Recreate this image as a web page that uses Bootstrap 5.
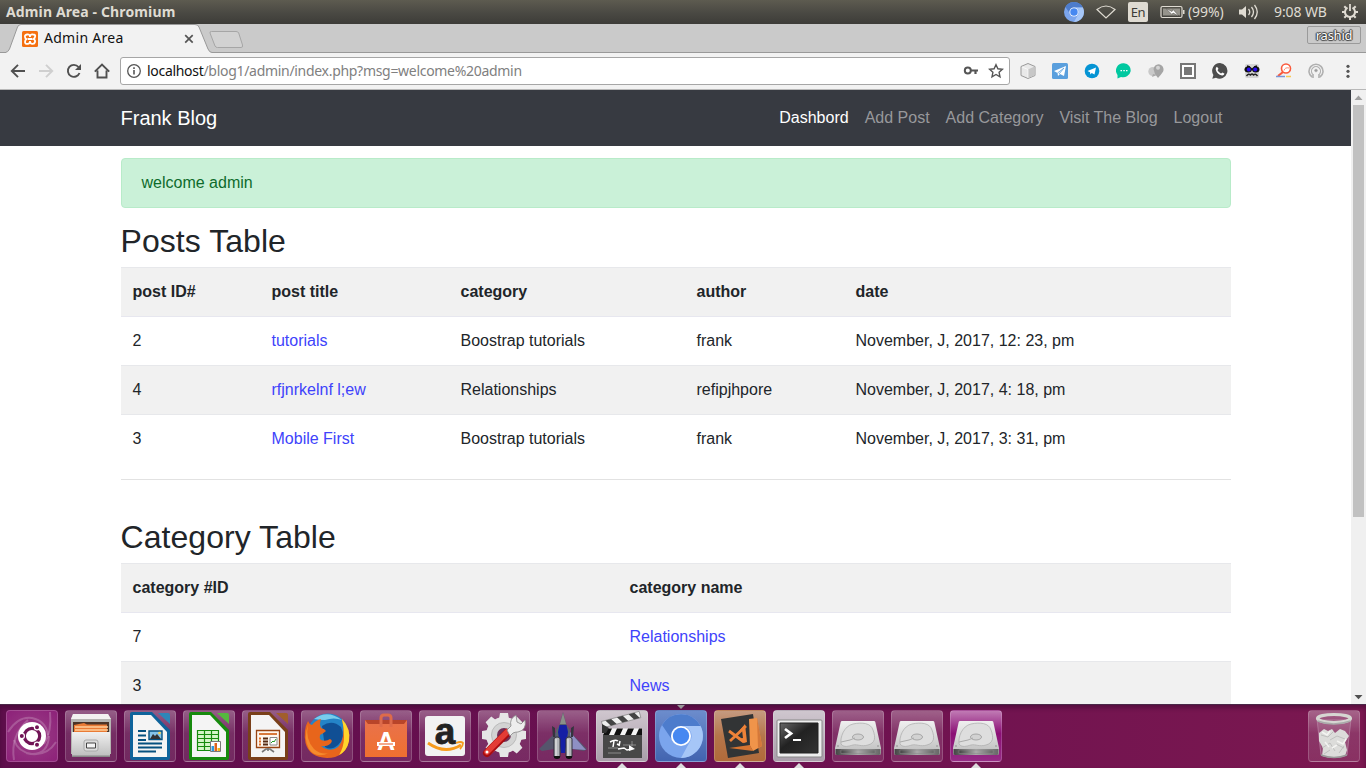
<!DOCTYPE html>
<html lang="en">
<head>
<meta charset="utf-8">
<title>Admin Area</title>
<link href="https://cdn.jsdelivr.net/npm/bootstrap@5.3.0/dist/css/bootstrap.min.css" rel="stylesheet">
<style>
body{width:1366px;height:768px;overflow:hidden;font-family:"Liberation Sans",Arial,sans-serif;color:#212529;line-height:1.5}
svg{display:block;flex:none}
.ui{font-family:"Noto Sans","Open Sans",sans-serif;line-height:1;white-space:nowrap}
.panel{height:24px;background:linear-gradient(#5d5b50,#4b4a44 50%,#3d3c38);color:#dfdbd2;padding-left:6px}
.panel-title{font-size:14px;font-weight:700;letter-spacing:.13px}
.tray{width:302px}
.lang{width:20px;height:20px;background:#dfdbd2;color:#3c3b37;border-radius:2px;font-size:13px;letter-spacing:-.5px}
.tray-text{font-size:14px;letter-spacing:-.1px}
.strip{height:29px;background:#cacaca;border-bottom:1px solid #999;padding-left:6px}
.tabx{width:206px;height:29px;margin-bottom:-1px}
.tabx>.shape{position:absolute;left:0;top:0}
.tab-in{padding:0 9px 0 16px;height:29px;position:relative;color:#111}
.tab-label{font-size:14px;letter-spacing:.28px;padding-bottom:1px}
.user-btn{width:54px;height:18px;margin:2px 5px 0 0;border:1px solid #9a9a9a;border-radius:2px;font-size:13px;letter-spacing:-.25px;color:#fff;text-shadow:0 0 1px #222,1px 0 1px #444,-1px 0 1px #444,0 1px 1px #444,0 -1px 1px #444}
.toolbar{height:37px;background:#f2f2f2;border-bottom:1px solid #b8b8b8;padding:0 10px}
.omni{width:890px;height:28px;background:#fff;border:1px solid #a6a6a6;border-radius:3px;margin-left:10px;padding:0 5px;font-size:14px;letter-spacing:-.3px;color:#808080}
.omni b{font-weight:400;color:#111}
.view{height:614px;overflow:hidden}
.site-nav{background:#373a41;height:56px;padding:8px 0}
.wrap-page{width:1110px;margin-left:120.5px}
.site-nav .navbar-brand{font-size:20px;line-height:30px;color:#fff;padding:5px 0;margin:0}
.site-nav .nav-link{font-size:16px;line-height:24px;padding:8px;color:#97989b}
.site-nav .nav-link.active{color:#fff}
.note{margin:12px 0 16px;padding:12px 20px;border:1px solid #b8ebc9;border-radius:4px;background:#caf1d8;color:#0e6b2c;line-height:24px}
h2{font-size:32px;font-weight:400;line-height:1.1;margin:0 0 8px;letter-spacing:.05px}
.table{table-layout:fixed;margin-bottom:15px;color:#212529}
.table>tbody>tr>*{padding:12px;border-width:1px 0 0;border-color:#e7e8eb;height:49px;line-height:24px;background:transparent;box-shadow:none;color:#212529}
.table>tbody>tr:nth-child(odd)>*{background:#f1f1f1}
.table>tbody>tr:nth-child(2)>*{border-top-color:#e7e7ef}
.table a{color:#4043fb;text-decoration:none}
.c1{width:139px}.c2{width:189px}.c3{width:236px}.c4{width:159px}.k1{width:497px}
.rule{height:1px;background:#e2e2e2;margin-bottom:40px}
.scroll{width:15px;background:#f0f0f0}
.thumb{width:11px;height:412px;background:#c1c1c1;margin-top:1px}
.dock{height:64px;background:linear-gradient(90deg,#5f0e4c,#6a1050 50%,#7b1850);border-top:1px solid #4a2848;padding:5px 6px 0;box-shadow:inset 0 3px 4px #3b082f88}
.tile{width:52px;height:52px;border-radius:4px;border:1px solid #ffffff2e;background:linear-gradient(#ffffff55,#ffffff22 45%,#ffffff1c);position:relative;flex:none}
.tile>svg{margin:-1px;overflow:visible}
.tile.t-ub{background:radial-gradient(circle,#a2438c,#932f7f 55%,#8d2179)}
.tile.t-gray{background:linear-gradient(#cfc6ce,#a99eaa)}
.tile.t-blue{background:linear-gradient(#6c8ccc,#4264b0)}
.tile.t-org{background:linear-gradient(#c59a80,#b5754a 50%,#b06a3a)}
.tile.t-mag{background:linear-gradient(#c07ab4,#8b0f75 45%,#962c85)}
.run::after,.foc::before{content:"";position:absolute;left:19.500px;border:5px solid transparent}
.run::after{bottom:-7px;border-top:0;border-bottom-color:#ddd}
.foc::before{top:-6px;border-bottom:0;border-width:4px 4px 0;left:20.500px;border-top-color:#999}
</style>
</head>
<body class="d-flex flex-column">
<svg width="0" height="0" class="position-absolute">
<defs>
<linearGradient id="metal" x2="0" y2="1"><stop stop-color="#f0f0f0"/><stop offset="1" stop-color="#bcbcbc"/></linearGradient>
<linearGradient id="gbag" x2="0" y2="1"><stop stop-color="#e8724c"/><stop offset="1" stop-color="#f07030"/></linearGradient>
<linearGradient id="gdark" x2="1" y2="1"><stop stop-color="#666"/><stop offset=".45" stop-color="#222"/><stop offset="1" stop-color="#333"/></linearGradient>
<linearGradient id="base" x2="1"><stop stop-color="#444"/><stop offset=".5" stop-color="#aaa"/><stop offset="1" stop-color="#666"/></linearGradient>
<symbol id="drive" viewBox="0 0 52 52">
<path d="M10 11h32q1 0 1.3 1L49 38v5q0 2-2 2H5q-2 0-2-2v-5L8.700 12q.3-1 1.300-1z" fill="url(#metal)"/>
<path d="M3.500 39h45v4.500q0 1.500-2 1.500h-41q-2 0-2-1.500z" fill="url(#base)"/><path d="M9 40h34v3.500H9z" fill="url(#base)" stroke="#888" stroke-width=".5"/>
<path d="M9 34c-1-7 3-18 12-20 9-2 18-1 20 6 3 8 2 13-5 15-7 2-10-1-15 0-4 1-9 3-12-1z" fill="#dedede" stroke="#ababab" stroke-width=".7"/>
<ellipse cx="26" cy="27" rx="5.500" ry="3" fill="#d2d2d2" stroke="#999" stroke-width=".8"/><path d="M9 32l9-2 5-2" stroke="#aaa" fill="none"/>
<circle cx="6" cy="36" r=".8" fill="#888"/><circle cx="46" cy="36" r=".8" fill="#888"/>
</symbol>
<symbol id="chromium" viewBox="0 0 44 44">
<circle cx="22" cy="22" r="22" fill="#7ba5ed"/><path d="M3 11A22 22 0 0 1 41.500 12H22a10 10 0 0 0-9.500 13z" fill="#4d7ccc"/>
<path d="M41.500 12A22 22 0 0 1 22 44L31.500 26.500A10 10 0 0 0 22 12z" fill="#a6c6f7"/>
<circle cx="22" cy="22" r="10" fill="#fff"/><circle cx="22" cy="22" r="8.200" fill="#4688f1"/>
</symbol>
</defs>
</svg>

<header class="panel ui d-flex align-items-center justify-content-between flex-shrink-0">
  <span class="panel-title">Admin Area - Chromium</span>
  <div class="tray d-flex align-items-center">
    <svg width="20" height="20" class="me-3"><use href="#chromium"/></svg>
    <svg width="20" height="16" viewBox="0 0 20 16" style="margin-left:-4px"><path d="M1 5.500Q10-1.500 19 5.500L10 14z" fill="none" stroke="#dfdbd2" stroke-width="1.200"/></svg>
    <span class="lang d-flex align-items-center justify-content-center" style="margin-left:12px">En</span>
    <svg width="25" height="14" viewBox="0 0 25 14" style="margin-left:12px"><rect x="1" y="1.500" width="21" height="11" rx="1.500" fill="none" stroke="#dfdbd2" stroke-width="1.200"/><path d="M3 3.500h17v7H3z" fill="#96948c"/><path d="M23 5v4h1.500V5z" fill="#dfdbd2"/><path d="M6 3.500l6 3 1-2 6 6.500-6-3-1 1.500z" fill="#fff" stroke="#44423d" stroke-width=".5"/></svg>
    <span class="tray-text" style="margin-left:3px;width:40px">(99%)</span>
    <svg width="21" height="16" viewBox="0 0 21 16" style="margin-left:10px"><path d="M1 5.500h3L8 2v12l-4-3.500H1z" fill="#dfdbd2"/><path d="M10.500 5q2.500 3 0 6M13.500 3q4 5 0 10M16.500 1q5.500 7 0 14" fill="none" stroke="#dfdbd2" stroke-width="1.300"/></svg>
    <span class="tray-text" style="margin-left:15px;width:57px">9:08 WB</span>
    <svg width="18" height="18" viewBox="0 0 18 18" style="margin-left:10px"><g fill="none" stroke="#dfdbd2"><path d="M6.500 4.700A5 5 0 1 0 11.500 4.700" stroke-width="2"/><path d="M9 1v7" stroke-width="1.800"/><path d="M3.300 3.300l2 2M14.700 3.300l-2 2M1 9h3M14 9h3M3.300 14.700l2-2M14.700 14.700l-2-2M9 14v3" stroke-width="2"/></g></svg>
  </div>
</header>

<div class="strip d-flex flex-shrink-0">
  <div class="tabx position-relative">
    <svg class="shape" width="240" height="29" viewBox="0 0 240 29"><path d="M-1 28.500Q2 28.500 3.500 25L11.500 3Q12.500.5 15 .5H189Q192 .5 193 3L202 25Q203.500 28.500 206 28.500V29H-1z" fill="#f2f2f2"/><path d="M-1 28.500Q2 28.500 3.500 25L11.500 3Q12.500.5 15 .5H189Q192 .5 193 3L202 25Q203.500 28.500 206 28.500" fill="none" stroke="#999"/><path d="M205.500 7.500H230q2 0 2.700 1.500l3.800 12q.7 2.500-1.500 2.500H211.500q-1.700 0-2.500-1.500L204 9q-.5-1.500 1.500-1.500z" fill="#d2d2d2" stroke="#a6a6a6"/></svg>
    <div class="tab-in ui d-flex align-items-center">
      <svg width="16" height="16" viewBox="0 0 16 16"><rect width="16" height="16" rx="1.500" fill="#f57010"/><path d="M5 3.500q3-.5 3 2.500 0-3 3-2.500 3 0 2 2.500-.3 1.500-1.500 2 2 1 1.500 3-.5 2-2.500 1.800Q8 13 8 10q0 3-2.500 2.800Q3 13 3 11q0-2 1.500-3Q3 7.500 3 6q-.5-2 2-2.500zM6 8h4" fill="none" stroke="#fff" stroke-width="1.800"/></svg>
      <span class="tab-label" style="margin-left:6px">Admin Area</span>
      <svg width="10" height="10" viewBox="0 0 10 10" class="ms-auto" style="margin-right:9px"><path d="M1.200 1.200l7.500 7.500m0-7.500L1.200 8.700" stroke="#555" stroke-width="1.700"/></svg>
    </div>
  </div>
  <span class="user-btn ms-auto d-flex align-items-center justify-content-center ui">rashid</span>
</div>

<div class="toolbar ui d-flex align-items-center flex-shrink-0">
  <div class="d-flex" style="gap:12px">
    <svg width="16" height="16" viewBox="0 0 16 16"><path d="M15 8H2M8 1.800L1.800 8 8 14.200" fill="none" stroke="#505050" stroke-width="1.900"/></svg>
    <svg width="16" height="16" viewBox="0 0 16 16"><path d="M1 8h13M8 1.800L14.200 8 8 14.200" fill="none" stroke="#cfcfcf" stroke-width="1.900"/></svg>
    <svg width="16" height="16" viewBox="0 0 16 16"><path d="M13.500 10A6 6 0 1 1 12.500 4" fill="none" stroke="#505050" stroke-width="1.900"/><path d="M15 1v6H9z" fill="#505050"/></svg>
    <svg width="16" height="16" viewBox="0 0 16 16"><path d="M.8 8.700L8 1.500l7.200 7.200M3.500 7.500v7h9v-7" fill="none" stroke="#505050" stroke-width="1.900"/></svg>
  </div>
  <div class="omni d-flex align-items-center">
    <svg width="16" height="16" viewBox="0 0 16 16"><circle cx="8" cy="8" r="6.300" fill="none" stroke="#555" stroke-width="1.300"/><path d="M7.200 4.300h1.600v1.600H7.200zM7.200 7h1.600v4.500H7.200z" fill="#555"/></svg>
    <span style="margin-left:5px"><b>localhost</b>/blog1/admin/index.php?msg=welcome%20admin</span>
    <svg width="16" height="16" viewBox="0 0 16 16" class="ms-auto"><circle cx="4.800" cy="7.500" r="3" fill="none" stroke="#555" stroke-width="2"/><path d="M7.500 7.500H15M12.500 7.500v3.500" stroke="#555" stroke-width="2.200"/></svg>
    <svg width="16" height="16" viewBox="0 0 16 16" style="margin:0 0 0 9px"><path d="M8 1.700l1.900 4.100 4.500.5-3.300 3 .9 4.500-4-2.300-4 2.300.9-4.500-3.300-3 4.500-.5z" fill="none" stroke="#555" stroke-width="1.400"/></svg>
  </div>
  <div class="d-flex gap-3" style="margin-left:10px">
    <svg width="16" height="16" viewBox="0 0 16 16"><path d="M8 .5l7 3v9l-7 3-7-3v-9z" fill="#e9e9e9" stroke="#999"/><path d="M8 6.500l6.500-3v9L8 15z" fill="#c7c7c7"/><path d="M2 4l6 2.500V15" fill="none" stroke="#fff" stroke-width=".7"/></svg>
    <svg width="16" height="16" viewBox="0 0 16 16"><rect width="16" height="16" rx="1.500" fill="#5a9fdd"/><path d="M2 8l12-5-2 10-4-2-2 2-.5-3z" fill="#fff"/><path d="M5.500 10L12 5 7 11" stroke="#5a9fdd" stroke-width=".8" fill="none"/></svg>
    <svg width="16" height="16" viewBox="0 0 16 16"><circle cx="8" cy="8" r="7.300" fill="#0594d4"/><path d="M3.500 8l8.500-3.500-1.500 7-2.800-1.500-1.300 1.500L6 9.200z" fill="#fff"/></svg>
    <svg width="16" height="16" viewBox="0 0 16 16"><path d="M8 .3a7.300 7 0 1 1-3 13.600L1.500 15.500V12A7.300 7.300 0 0 1 8 .3z" fill="#00c8a0"/><path d="M4.500 7h1.500v1.300H4.500zM7.300 7h1.500v1.300H7.300zM10 7h1.500v1.300H10z" fill="#fff"/></svg>
    <svg width="16" height="16" viewBox="0 0 16 16"><circle cx="4.800" cy="8.500" r="4.500" fill="#c9c9c9"/><path d="M4 14l1-3 4 1z" fill="#aaa"/><path d="M10.500 1.200a5.200 5.200 0 0 1 4.500 7.500q-2 3-5 6.300L7 11 5.500 6q1-4.500 5-4.800z" fill="#a5a5a5"/><circle cx="10" cy="4.800" r="2" fill="#d5d5d5"/></svg>
    <svg width="16" height="16" viewBox="0 0 16 16"><path d="M1 1h14v14H1z" fill="#fff" stroke="#777" stroke-width="2"/><path d="M4 4h8v8H4z" fill="#777"/></svg>
    <svg width="16" height="16" viewBox="0 0 16 16"><path d="M8 0a7.800 7.800 0 1 1-4 14.700L.3 15.800 1.400 12A7.800 7.800 0 0 1 8 0z" fill="#4d4d4d"/><path d="M5 3.700l1.500 2-1 1.500q1.500 2.500 3.500 3.300l1.500-1 2 1.300q-.8 2-2.500 1.700Q5 11.500 3.700 6.500q-.2-2 1.300-2.800z" fill="#fff"/></svg>
    <svg width="16" height="16" viewBox="0 0 16 16"><rect x="1" y="1" width="14" height="14" rx="2" fill="#d5d5d5"/><path d="M3 3l3 1M13 3l-3 1M6 6h4" stroke="#111" stroke-width="1.500"/><ellipse cx="4.200" cy="6.500" rx="3.700" ry="3" fill="#111"/><ellipse cx="11.800" cy="6.500" rx="3.700" ry="3" fill="#111"/><circle cx="4.800" cy="6.500" r="2" fill="#2a0cf0"/><circle cx="11.200" cy="6.500" r="2" fill="#2a0cf0"/><path d="M2.500 13q2-3 4-1 1.500-2 3 0 2-2 4 1" fill="none" stroke="#222" stroke-width="1.400"/></svg>
    <svg width="16" height="16" viewBox="0 0 16 16"><circle cx="10" cy="5.500" r="4.500" fill="#fff" stroke="#fa5a3c" stroke-width="1.600"/><path d="M7 9l-5 4" stroke="#fa5a3c" stroke-width="2.200"/><path d="M8 7.500Q9 4 13 5" stroke="#fa8a70" fill="none"/><path d="M0 13.500h9" stroke="#7b95d5" stroke-width="1.500"/><path d="M10 13.500h5" stroke="#f6ca55" stroke-width="1.500"/></svg>
    <svg width="16" height="16" viewBox="0 0 16 16" fill="none" stroke="#b0b0b0"><path d="M4 14A7 7 0 1 1 12 14" stroke-width="1.600"/><path d="M4.500 11A4.500 4.500 0 1 1 11.500 11" stroke-width="1.200"/><circle cx="8" cy="7.500" r="1.300" fill="#999"/><path d="M5 15v-4M11 15v-4" stroke-width="1.600"/></svg>
    <svg width="16" height="16" viewBox="0 0 16 16" fill="#555"><circle cx="8" cy="3.300" r="1.600"/><circle cx="8" cy="8.300" r="1.600"/><circle cx="8" cy="13.300" r="1.600"/></svg>
  </div>
</div>

<div class="view d-flex flex-shrink-0">
  <div class="flex-grow-1 bg-white">
    <nav class="site-nav">
      <div class="wrap-page d-flex justify-content-between align-items-center">
        <a class="navbar-brand" href="#">Frank Blog</a>
        <ul class="nav flex-nowrap">
          <li class="nav-item"><a class="nav-link active" href="#">Dashbord</a></li>
          <li class="nav-item"><a class="nav-link" href="#">Add Post</a></li>
          <li class="nav-item"><a class="nav-link" href="#">Add Category</a></li>
          <li class="nav-item"><a class="nav-link" href="#">Visit The Blog</a></li>
          <li class="nav-item"><a class="nav-link" href="#">Logout</a></li>
        </ul>
      </div>
    </nav>
    <main class="wrap-page">
      <div class="note">welcome admin</div>
      <h2>Posts Table</h2>
      <table class="table">
        <colgroup><col class="c1"><col class="c2"><col class="c3"><col class="c4"><col></colgroup>
        <tbody>
          <tr><th>post ID#</th><th>post title</th><th>category</th><th>author</th><th>date</th></tr>
          <tr><td>2</td><td><a href="#">tutorials</a></td><td>Boostrap tutorials</td><td>frank</td><td>November, J, 2017, 12: 23, pm</td></tr>
          <tr><td>4</td><td><a href="#">rfjnrkelnf l;ew</a></td><td>Relationships</td><td>refipjhpore</td><td>November, J, 2017, 4: 18, pm</td></tr>
          <tr><td>3</td><td><a href="#">Mobile First</a></td><td>Boostrap tutorials</td><td>frank</td><td>November, J, 2017, 3: 31, pm</td></tr>
        </tbody>
      </table>
      <div class="rule"></div>
      <h2>Category Table</h2>
      <table class="table">
        <colgroup><col class="k1"><col></colgroup>
        <tbody>
          <tr><th>category #ID</th><th>category name</th></tr>
          <tr><td>7</td><td><a href="#">Relationships</a></td></tr>
          <tr><td>3</td><td><a href="#">News</a></td></tr>
        </tbody>
      </table>
    </main>
  </div>
  <div class="scroll d-flex flex-column align-items-center">
    <svg width="15" height="14" viewBox="0 0 15 14"><path d="M3.500 10L7.500 5.500l4 4.500z" fill="#a0a0a0"/></svg>
    <div class="thumb"></div>
    <svg width="15" height="14" viewBox="0 0 15 14" class="mt-auto"><path d="M3.500 5h8l-4 4.300z" fill="#505050"/></svg>
  </div>
</div>

<footer class="dock d-flex flex-shrink-0" style="gap:7px">
  <div class="tile t-ub"><svg width="52" height="52" viewBox="0 0 52 52"><g fill="none" stroke="#fff" stroke-opacity=".2" stroke-width="2"><path d="M2 22Q12 6 26 8q14 3 16 17"/><path d="M44 2q2 20-6 32M8 50Q4 26 22 10"/><path d="M43 26Q42 44 26 44 12 42 8 30M50 32q-10 16-30 11"/></g><circle cx="26" cy="26" r="14" fill="#fff"/><circle cx="26" cy="26" r="7.700" fill="none" stroke="#711456" stroke-width="3.200"/><g fill="#711456" stroke="#fff" stroke-width="1.200"><circle cx="15.800" cy="26" r="2.600"/><circle cx="31" cy="17.300" r="2.600"/><circle cx="31" cy="34.700" r="2.600"/></g></svg></div>
  <div class="tile"><svg width="52" height="52" viewBox="0 0 52 52"><path d="M8 4h35l3 5v35H6V9z" fill="#b5b5b1"/><path d="M8 4h35l3 5H6z" fill="#f2f2f0"/><path d="M8 12h36v11H8z" fill="#4c3427"/><path d="M9 15l10-2 3 1.500h20V24H9z" fill="#e97b35"/><path d="M10 17h33M10 20h33" stroke="#ffd09b" stroke-width="1.300"/><path d="M7 22h38v25H7z" fill="url(#metal)"/><path d="M7 45.500h38V47H7z" fill="#888"/><rect x="19" y="30" width="14" height="11" rx="2" fill="#ddd" stroke="#a8a8a8"/><path d="M21.500 33h9v5h-9z" fill="#f4f4f4" stroke="#444"/></svg></div>
  <div class="tile"><svg width="52" height="52" viewBox="0 0 52 52"><path d="M8 2h20l18 18v28q0 2-2 2H8q-2 0-2-2V4q0-2 2-2z" fill="#0e639b"/><path d="M9 5h18l16 17v25H9z" fill="#f4f4f4"/><path d="M34 3h10q2 0 2 2v9z" fill="#2f86b8"/><path d="M14 21h8M14 25.500h8M14 30h8M14 33.500h24M14 37.500h24M14 41.500h18" stroke="#05507f" stroke-width="2"/><path d="M25 21h13v8.500H25z" fill="#85c4e8" stroke="#05507f" stroke-width="1.400"/><path d="M26 29l3-5 2 2 2-2 4 5z" fill="#333"/><circle cx="35.500" cy="23" r="1.300" fill="#ffd54f"/></svg></div>
  <div class="tile"><svg width="52" height="52" viewBox="0 0 52 52"><path d="M8 2h20l18 18v28q0 2-2 2H8q-2 0-2-2V4q0-2 2-2z" fill="#168a0d"/><path d="M9 5h18l16 17v25H9z" fill="#f4f4f4"/><path d="M34 3h10q2 0 2 2v9z" fill="#55b83f"/><path d="M14.500 20.500h21v20h-21zM14.500 24.500h21M14.500 28.500h21M14.500 32.500h21M14.500 36.500h21M21.500 20.500v20M28.500 20.500v20" fill="#d4f5c8" stroke="#168a0d" stroke-width="1.200"/><path d="M27.500 31.500h10v10h-10z" fill="#fff" stroke="#777"/><path d="M28.500 36h2.500v5h-2.500z" fill="#2d9ae0"/><path d="M31.500 33h2.500v8h-2.500z" fill="#e0641a"/><path d="M34.500 38h2.500v3h-2.500z" fill="#efb51d"/></svg></div>
  <div class="tile"><svg width="52" height="52" viewBox="0 0 52 52"><path d="M8 2h20l18 18v28q0 2-2 2H8q-2 0-2-2V4q0-2 2-2z" fill="#79401a"/><path d="M9 5h18l16 17v25H9z" fill="#f4f4f4"/><path d="M34 3h10q2 0 2 2v9z" fill="#a15e2c"/><path d="M14.500 20.500h23v17h-23z" fill="#fff6ed" stroke="#984412" stroke-width="1.300"/><path d="M17 24h18" stroke="#d46b27" stroke-width="1.800"/><path d="M17 28.500h2M17 31.500h2M17 34.500h2" stroke="#df6f26" stroke-width="1.800"/><path d="M21 28.500h5M21 31.500h5M21 34.500h5" stroke="#562a12" stroke-width="1.800"/><path d="M28 27.500h7v7.500h-7z" fill="#fff" stroke="#888"/><path d="M29 33l2-2 1 1 2-3" stroke="#249b25" fill="none"/><path d="M20 42l4-3h4l4 3M26 38v3" stroke="#777" stroke-width="1.600" fill="none"/></svg></div>
  <div class="tile"><svg width="52" height="52" viewBox="0 0 52 52"><circle cx="27" cy="24" r="20.500" fill="#2484c7"/><path d="M13 9Q26-1 41 10q-8-3-17 0-6 0-11-1z" fill="#79ccec"/><path d="M21 16q10-7 19 1 5 11-3 18-7 6-13 2z" fill="#104f94"/><path d="M41 9q9 10 7 22-4 17-22 17Q8 47 4.500 33 2 20 7 11q1 3 4 4 4-5 9-6-2 5 0 9 4 1 5 3-2 2-6 4-1 3 1 5 5 2 9-1 3 1 1 4-4 4-10 3 9 7 17 1 8-9 4-28z" fill="#e8651b"/><path d="M41 9q9 10 7 22-2 10-10 14 5-8 5-18 0-10-2-18z" fill="#ffd52c"/><path d="M7 15q-3 14 6 24 7 6 15 4-13 6-20-4Q2 28 7 15z" fill="#f58b2d"/></svg></div>
  <div class="tile"><svg width="52" height="52" viewBox="0 0 52 52"><path d="M5 10h42v37H5z" fill="url(#gbag)"/><path d="M5 10h42l-3 4H8z" fill="#b8452a"/><path d="M21 17V8q0-3 3-3h4q3 0 3 3v9" fill="none" stroke="#dd6b4a" stroke-width="3"/><text x="26" y="40" text-anchor="middle" font-family="Liberation Sans,sans-serif" font-weight="700" font-size="25" fill="#fff">A</text><path d="M17 34h18" stroke="#fff" stroke-width="4"/><path d="M19 34h14" stroke="#ed7144" stroke-width="1.200"/></svg></div>
  <div class="tile"><svg width="52" height="52" viewBox="0 0 52 52"><rect x="6" y="6" width="40" height="40" rx="3" fill="#f2f2f2"/><text x="26" y="33.500" text-anchor="middle" font-family="Liberation Sans,sans-serif" font-weight="700" font-size="37" fill="#222" stroke="#222" stroke-width=".8">a</text><path d="M9 33q17 12 33 2" fill="none" stroke="#f79b1c" stroke-width="2.800"/><path d="M37 33q5-2 7 0 0 3-3 6" fill="none" stroke="#f79b1c" stroke-width="1.800"/></svg></div>
  <div class="tile"><svg width="52" height="52" viewBox="0 0 52 52"><g fill="#e6e6e6"><g id="teeth"><path d="M22 3h8l1 6H21zM22 47h8l1-6H21z"/><path d="M4 21v8l6 1V20zM48 21v8l-6 1V20z"/></g><use href="#teeth" transform="rotate(45 26 25)"/></g><circle cx="26" cy="25" r="18" fill="#e6e6e6"/><circle cx="26" cy="25" r="12.500" fill="#d3d3d3" stroke="#bbb"/><circle cx="26" cy="25" r="7" fill="#713058"/><path d="M9 43L29 23" stroke="#a80c10" stroke-width="8" stroke-linecap="round"/><path d="M9 42L29 22" stroke="#e33c35" stroke-width="5.500" stroke-linecap="round"/><path d="M29 20l4-4q-2-7 5-11l1 7 4 2 4-4q2 10-7 12-3 0-5 1l-3 3z" fill="#eee" stroke="#888" stroke-width=".8"/><circle cx="9" cy="42" r="1.500" fill="#fff"/></svg></div>
  <div class="tile"><svg width="52" height="52" viewBox="0 0 52 52"><path d="M20 21L2 39l3 2 12-2h18l12 2 3-2-18-18z" fill="#55556c"/><path d="M33 22l16 18-14-1z" fill="#8e90c4"/><path d="M26 2l3.500 13 3.500 5v22H19V20l3.500-5z" fill="#59616b"/><path d="M22.500 15h7l1.500 7-3 21h-4l-3-21z" fill="#151fa5"/><path d="M26 3l3 11h-6z" fill="#8a9089"/><path d="M17 29q0-2 3-2t3 2v18h-6zM29 29q0-2 3-2t3 2v18h-6z" fill="#b2b5ba" stroke="#30303c"/><path d="M19 29v17M31 29v17" stroke="#eee"/><path d="M17 46h6v2q-3 2-6 0zM29 46h6v2q-3 2-6 0z" fill="#111"/><path d="M15 16l1 11h2v-9zM37 16l-1 11h-2v-9z" fill="#34353e"/></svg></div>
  <div class="tile t-gray run"><svg width="52" height="52" viewBox="0 0 52 52"><path d="M7 22h39v26H7z" fill="#484848"/><path d="M7 18.500h39V25H7z" fill="#f5f5f5"/><path d="M10 18.500h6L13 25H7zM21 18.500h6L24 25h-6zM32 18.500h6L35 25h-6zM43 18.500h3V25h-6z" fill="#111"/><g transform="rotate(-15 8 17)"><path d="M7 11h39v6.500H7z" fill="#eee" stroke="#777" stroke-width=".6"/><path d="M11 11h6l4 6.500h-6zM23 11h6l4 6.500h-6zM35 11h6l4 6.500h-6z" fill="#444"/></g><path d="M6 14l7 4-3 5H6z" fill="#333"/><path d="M14 32q5-3 8-1M18 31l-1 6M21 34l2 1M24 31l-1 5M22 39l6-1 3 2 5-1" stroke="#fff" stroke-width="1.500" fill="none"/><path d="M33 35l6 4-6 2z" fill="#fff"/><path d="M12 38h10M12 43h13M27 35h13M36 31v5" stroke="#aaa" stroke-width=".7"/></svg></div>
  <div class="tile t-blue run foc"><svg width="52" height="52" viewBox="0 0 52 52"><use href="#chromium" x="4" y="4" width="44" height="44"/></svg></div>
  <div class="tile t-org run"><svg width="52" height="52" viewBox="0 0 52 52"><path d="M7 9l32-5 6 39-31 5z" fill="#323435"/><path d="M35 9l8-1 5 28-9 5-3-5z" fill="#f0944a"/><path d="M43 8l5 28-4 2z" fill="#d4783a"/><path d="M15 38l21-3 3 6z" fill="#d67532"/><path d="M15 21l15 11M16 31l16-15" fill="none" stroke="#ee8238" stroke-width="2.800"/><path d="M31 14l2 18-3 1-6-4 5-1-1-8-3 1z" fill="#ee8238"/></svg></div>
  <div class="tile t-gray run"><svg width="52" height="52" viewBox="0 0 52 52"><rect x="4" y="10" width="45" height="37" rx="1" fill="#eee" stroke="#888"/><path d="M7 13h38v30H7z" fill="url(#gdark)" stroke="#222"/><path d="M12 19l6 4.500-6 4.500" fill="none" stroke="#fff" stroke-width="2.800"/><path d="M20 30h8" stroke="#fff" stroke-width="2"/></svg></div>
  <div class="tile"><svg width="52" height="52"><use href="#drive"/></svg></div>
  <div class="tile"><svg width="52" height="52"><use href="#drive"/></svg></div>
  <div class="tile t-mag run"><svg width="52" height="52"><use href="#drive"/></svg></div>
  <div class="tile ms-auto"><svg width="52" height="52" viewBox="0 0 52 52"><path d="M9 9l4 36q13 5 26 0l4-36" fill="#ffffff20" stroke="#b57fa0" stroke-width=".8"/><path d="M11 23l5-4 4 2 4-2 3 4 5-4 5 2 4 5-4 6 2 8-2 6q-12 3-23 0l1-8-4-7z" fill="#dcdcda"/><path d="M13 25l7 2 6-6M22 30l7-4 8 3M14 38l8-5 5 8M28 34l8 4M16 44l6-4M31 43l5-7" stroke="#b8b8b6" fill="none" stroke-width=".8"/><path d="M14 22l5 3 3-4M29 31l6 3 3-5M17 32l4 5M24 38l5-3" stroke="#f4f4f2" stroke-width="1.500" fill="none"/><path d="M13 45q13 5 26 0" fill="none" stroke="#999" stroke-width="1.500"/><ellipse cx="26" cy="8.500" rx="16.500" ry="4" fill="none" stroke="#d6d6d2" stroke-width="3.200"/><path d="M9.500 11q16 6 33 0" fill="none" stroke="#aaa" stroke-width="1.500"/></svg></div>
</footer>
<script src="https://cdn.jsdelivr.net/npm/bootstrap@5.3.0/dist/js/bootstrap.bundle.min.js"></script>
</body>
</html>
